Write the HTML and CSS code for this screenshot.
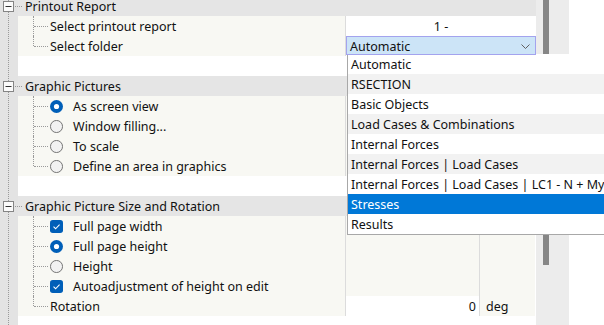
FILE: index.html
```html
<!DOCTYPE html>
<html lang="en">
<head>
    <meta charset="UTF-8">
    <title>Printout Settings</title>
    <link rel="stylesheet" href="styles.css">
</head>
<body>
    <div class="page">
        <div class="panel">
            <div class="tree">
                <!-- Printout Report -->
                <div class="row head">
                    <svg class="box" width="20" height="11" viewBox="0 0 20 11"><rect x="0.5" y="0.5" width="10" height="10" fill="#fbfbfb" stroke="#858585"/><path d="M2.5 5.5h6" stroke="#333" stroke-width="1"/><path d="M12 5.5h8" stroke="#9a9a9a" stroke-dasharray="1 1"/></svg>
                    <span class="txt">Printout Report</span>
                </div>
                <div class="row">
                    <div class="gut"></div>
                    <div class="name"><span class="branch"></span><span class="txt">Select printout report</span></div>
                    <div class="val wide center">1 -</div>
                </div>
                <div class="row">
                    <div class="gut"></div>
                    <div class="name"><span class="branch last"></span><span class="txt">Select folder</span></div>
                    <div class="val wide combo-cell">
                        <div class="combo">
                            <span>Automatic</span>
                            <svg width="9" height="5" viewBox="0 0 9 5"><path d="M0.5 0.5l4 4 4-4" fill="none" stroke="#606060"/></svg>
                        </div>
                        <div class="list">
                            <div class="opt">Automatic</div>
                            <div class="opt">RSECTION</div>
                            <div class="opt">Basic Objects</div>
                            <div class="opt">Load Cases &amp; Combinations</div>
                            <div class="opt">Internal Forces</div>
                            <div class="opt">Internal Forces | Load Cases</div>
                            <div class="opt">Internal Forces | Load Cases | LC1 - N + My</div>
                            <div class="opt sel">Stresses</div>
                            <div class="opt">Results</div>
                        </div>
                    </div>
                </div>
                <div class="row blank"></div>

                <!-- Graphic Pictures -->
                <div class="row head">
                    <svg class="box" width="20" height="11" viewBox="0 0 20 11"><rect x="0.5" y="0.5" width="10" height="10" fill="#fbfbfb" stroke="#858585"/><path d="M2.5 5.5h6" stroke="#333" stroke-width="1"/><path d="M12 5.5h8" stroke="#9a9a9a" stroke-dasharray="1 1"/></svg>
                    <span class="txt">Graphic Pictures</span>
                </div>
                <div class="row">
                    <div class="gut"></div>
                    <div class="name"><span class="branch"></span><svg class="ico" viewBox="0 0 14 14"><circle cx="7" cy="7" r="7" fill="#005fb8"/><circle cx="7" cy="7" r="2.8" fill="#fff"/></svg><span class="txt">As screen view</span></div>
                    <div class="val"></div><div class="unit"></div>
                </div>
                <div class="row">
                    <div class="gut"></div>
                    <div class="name"><span class="branch"></span><svg class="ico" viewBox="0 0 14 14"><circle cx="7" cy="7" r="6.5" fill="#f2f2f2" stroke="#6b6b6b"/></svg><span class="txt">Window filling...</span></div>
                    <div class="val"></div><div class="unit"></div>
                </div>
                <div class="row">
                    <div class="gut"></div>
                    <div class="name"><span class="branch"></span><svg class="ico" viewBox="0 0 14 14"><circle cx="7" cy="7" r="6.5" fill="#f2f2f2" stroke="#6b6b6b"/></svg><span class="txt">To scale</span></div>
                    <div class="val"></div><div class="unit"></div>
                </div>
                <div class="row">
                    <div class="gut"></div>
                    <div class="name"><span class="branch last"></span><svg class="ico" viewBox="0 0 14 14"><circle cx="7" cy="7" r="6.5" fill="#f2f2f2" stroke="#6b6b6b"/></svg><span class="txt">Define an area in graphics</span></div>
                    <div class="val"></div><div class="unit"></div>
                </div>
                <div class="row blank"></div>

                <!-- Graphic Picture Size and Rotation -->
                <div class="row head">
                    <svg class="box" width="20" height="11" viewBox="0 0 20 11"><rect x="0.5" y="0.5" width="10" height="10" fill="#fbfbfb" stroke="#858585"/><path d="M2.5 5.5h6" stroke="#333" stroke-width="1"/><path d="M12 5.5h8" stroke="#9a9a9a" stroke-dasharray="1 1"/></svg>
                    <span class="txt">Graphic Picture Size and Rotation</span>
                </div>
                <div class="row">
                    <div class="gut"></div>
                    <div class="name"><span class="branch"></span><svg class="ico" viewBox="0 0 14 14"><rect width="14" height="14" rx="3" fill="#005fb8"/><path d="M3.8 7.2l2.2 2.2 4.3-4.5" fill="none" stroke="#fff" stroke-width="1.1"/></svg><span class="txt">Full page width</span></div>
                    <div class="val"></div><div class="unit"></div>
                </div>
                <div class="row">
                    <div class="gut"></div>
                    <div class="name"><span class="branch"></span><svg class="ico" viewBox="0 0 14 14"><circle cx="7" cy="7" r="7" fill="#005fb8"/><circle cx="7" cy="7" r="2.8" fill="#fff"/></svg><span class="txt">Full page height</span></div>
                    <div class="val"></div><div class="unit"></div>
                </div>
                <div class="row">
                    <div class="gut"></div>
                    <div class="name"><span class="branch"></span><svg class="ico" viewBox="0 0 14 14"><circle cx="7" cy="7" r="6.5" fill="#f2f2f2" stroke="#6b6b6b"/></svg><span class="txt">Height</span></div>
                    <div class="val"></div><div class="unit"></div>
                </div>
                <div class="row">
                    <div class="gut"></div>
                    <div class="name"><span class="branch"></span><svg class="ico" viewBox="0 0 14 14"><rect width="14" height="14" rx="3" fill="#005fb8"/><path d="M3.8 7.2l2.2 2.2 4.3-4.5" fill="none" stroke="#fff" stroke-width="1.1"/></svg><span class="txt">Autoadjustment of height on edit</span></div>
                    <div class="val"></div><div class="unit"></div>
                </div>
                <div class="row">
                    <div class="gut"></div>
                    <div class="name"><span class="branch last"></span><span class="txt">Rotation</span></div>
                    <div class="val white right">0</div><div class="unit">deg</div>
                </div>
            </div>
        </div>
        <div class="scroll">
            <div class="thumb"></div>
        </div>
    </div>
</body>
</html>
```

FILE: styles.css
```css
html, body {
    margin: 0;
    height: 100%;
    overflow: hidden;
    background: #fff;
}
body {
    font-family: "Noto Sans", "Open Sans", sans-serif;
    font-size: 12.5px;
    color: #111;
}
.page {
    display: flex;
    height: 325px;
}
.panel {
    width: 536px;
    flex: none;
    background:
        repeating-linear-gradient(#9a9a9a 0 1px, transparent 1px 2px) 8px 0 / 1px 100% no-repeat,
        linear-gradient(#e3e3e3, #e3e3e3) 0 0 / 18px 100% no-repeat,
        #fff;
}
.tree {
    margin-top: -4px;
}
.row {
    display: flex;
    height: 20px;
    line-height: 20px;
}
.row.head {
    align-items: center;
    background: linear-gradient(to right, transparent 18px, #e5e5e5 18px);
}
.txt {
    padding-top: 2px;
}
.box {
    margin-left: 3px;
    margin-right: 2px;
    flex: none;
}
.gut {
    width: 18px;
    flex: none;
}
.name {
    width: 327px;
    flex: none;
    display: flex;
    align-items: center;
    background: #f8f8f3;
    white-space: nowrap;
    overflow: hidden;
}
.branch {
    position: relative;
    flex: none;
    width: 17px;
    height: 20px;
    margin-left: 15px;
}
.branch::before {
    content: "";
    position: absolute;
    left: 0;
    top: 0;
    bottom: 0;
    border-left: 1px dotted #9a9a9a;
}
.branch.last::before {
    bottom: 10px;
}
.branch::after {
    content: "";
    position: absolute;
    left: 1px;
    top: 10px;
    width: 14px;
    border-top: 1px dotted #9a9a9a;
}
.ico {
    width: 13px;
    height: 13px;
    flex: none;
    margin-right: 10px;
}
.val {
    width: 133px;
    flex: none;
    border-left: 1px solid #dcdcdc;
    background: #f8f8f3;
    line-height: 22px;
}
.val.wide {
    width: 190px;
    background: #fff;
}
.val.white {
    background: #fff;
}
.center {
    text-align: center;
}
.right {
    text-align: right;
    padding-right: 3px;
    box-sizing: border-box;
    width: 134px;
}
.unit {
    width: 56px;
    flex: none;
    border-left: 1px solid #dcdcdc;
    background: #f8f8f3;
    padding-left: 6px;
    box-sizing: border-box;
    line-height: 22px;
}
.blank {
    background: transparent;
}
.combo-cell {
    position: relative;
}
.combo {
    position: relative;
    z-index: 2;
    height: 19px;
    box-sizing: border-box;
    border: 1px solid #a3a3ee;
    background: #cce4f7;
    display: flex;
    align-items: center;
    justify-content: space-between;
    padding: 1px 5px 0 3px;
    line-height: 17px;
}
.list {
    position: absolute;
    z-index: 1;
    top: 18px;
    left: 1px;
    width: 280px;
    background: #fff;
    border-left: 1px solid #a8a8a8;
    border-bottom: 1px solid #a8a8a8;
    white-space: nowrap;
}
.opt {
    height: 20px;
    line-height: 22px;
    padding-left: 3px;
}
.opt:nth-child(even) {
    background: #f2f2f2;
}
.opt.sel {
    background: #0078d7;
    color: #fff;
}
.scroll {
    width: 33px;
    flex: none;
    background: #ececec;
}
.thumb {
    width: 6px;
    height: 265px;
    margin-left: 7px;
    background: #868686;
}
```
